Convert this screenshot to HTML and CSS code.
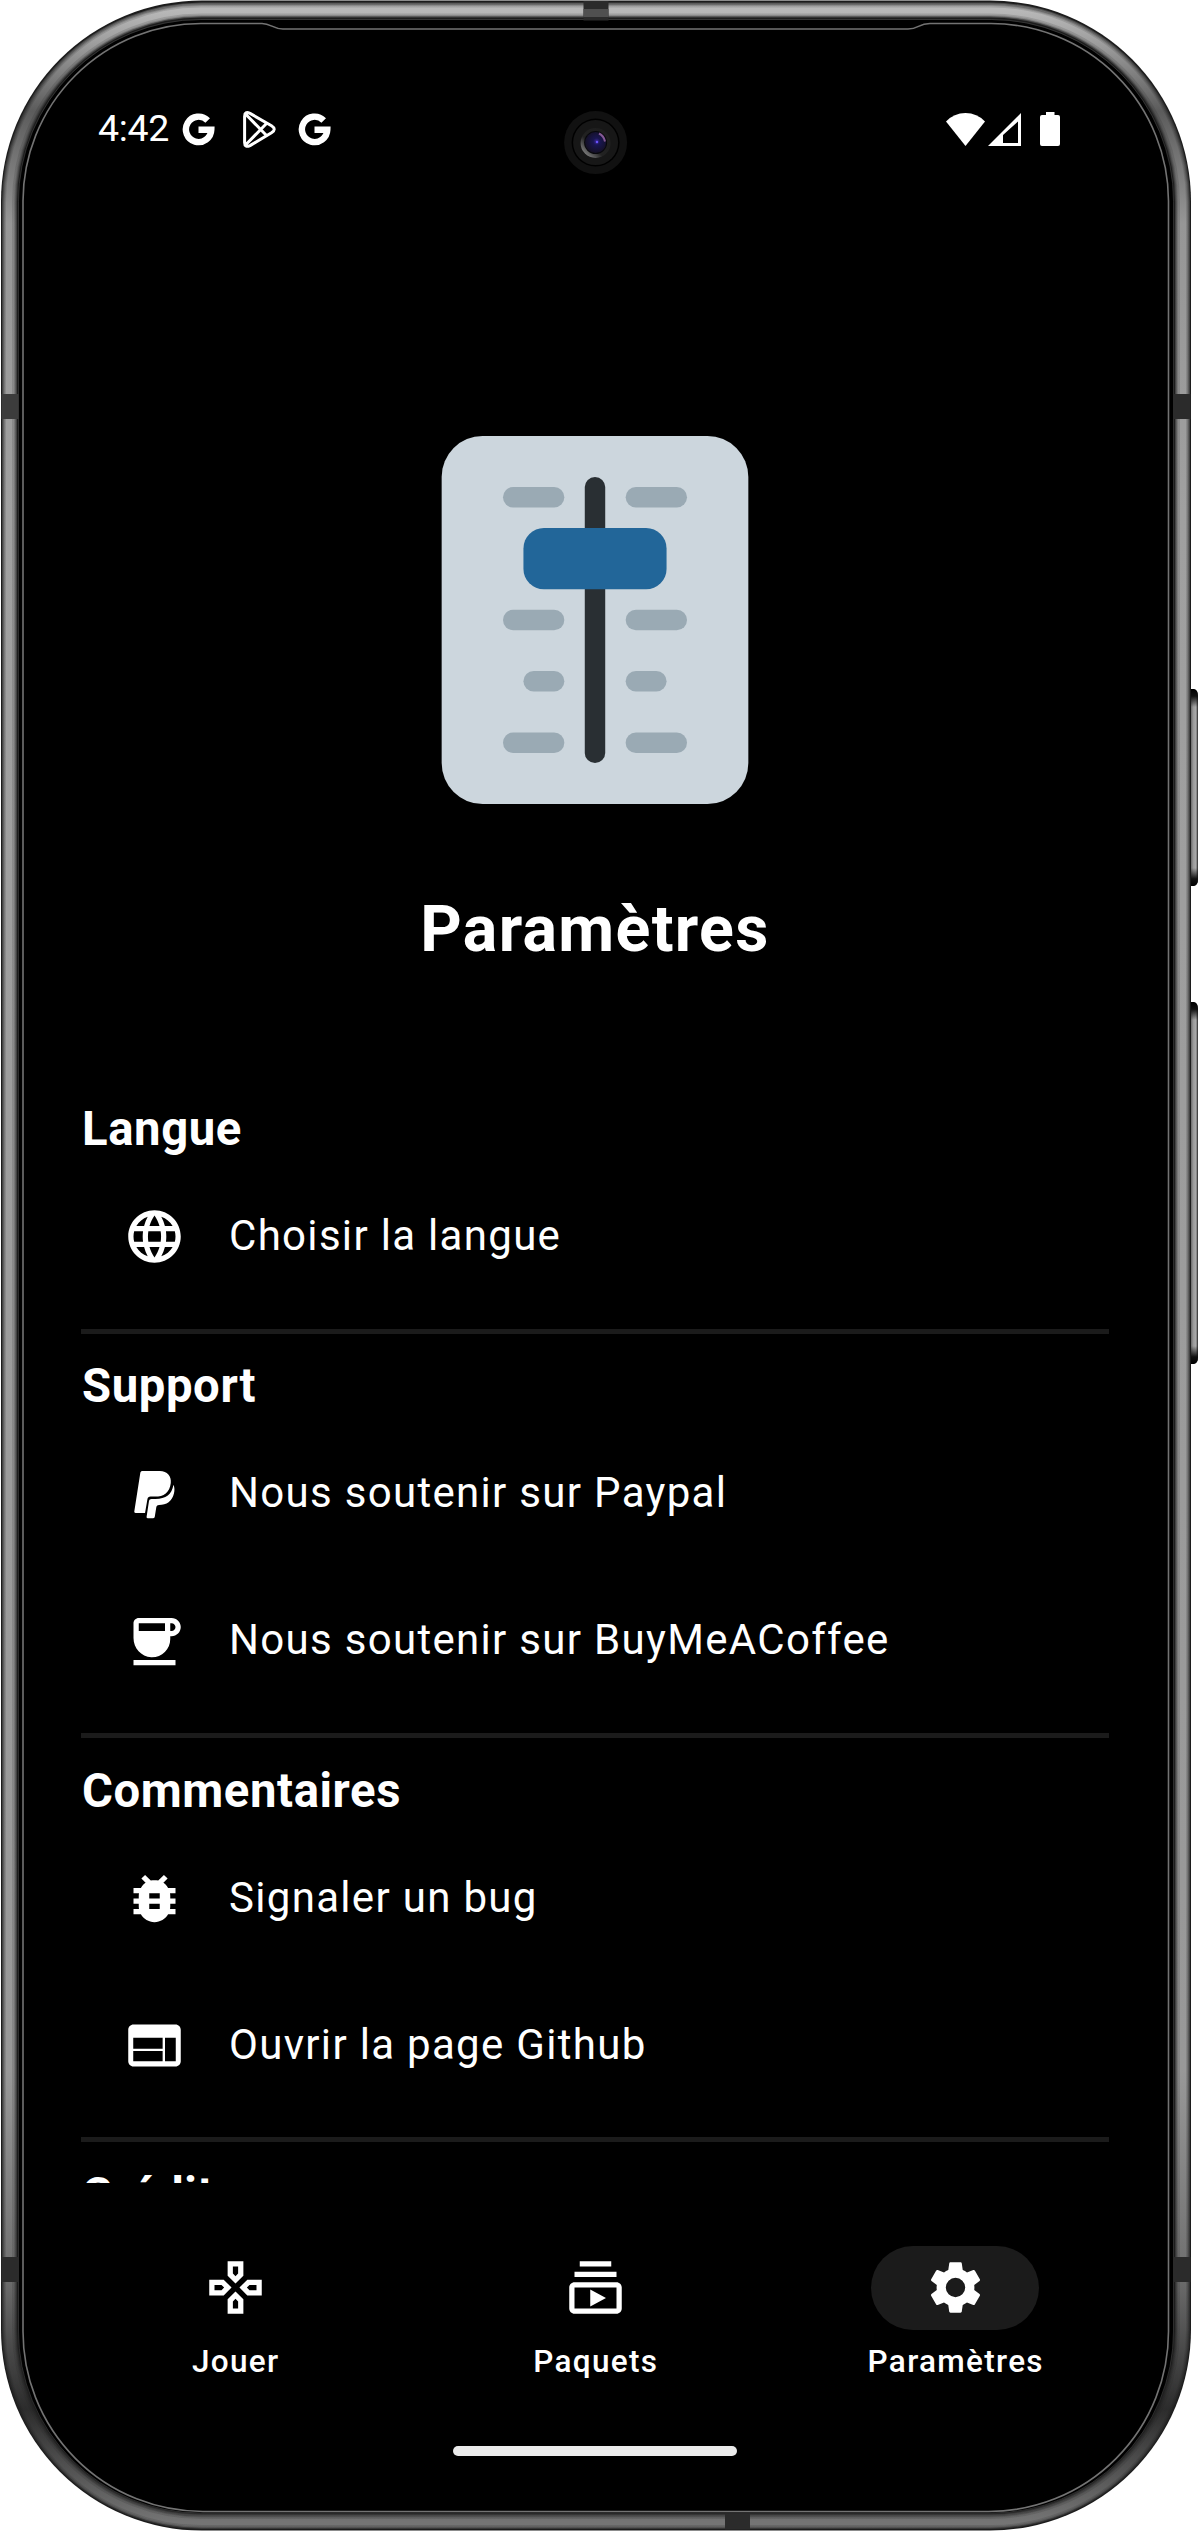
FILE: index.html
```html
<!DOCTYPE html>
<html lang="fr">
<head>
<meta charset="utf-8">
<title>Paramètres</title>
<link rel="stylesheet" href="styles.css">
</head>
<body>
<div class="device">
  <svg class="shell" viewBox="0 0 1198 2531" aria-hidden="true">
    <defs>
      <linearGradient id="metal" x1="0" y1="0" x2="0" y2="1">
        <stop offset="0" stop-color="#b8b8b8"/>
        <stop offset=".012" stop-color="#a0a0a0"/>
        <stop offset=".04" stop-color="#5c5c5c"/>
        <stop offset=".085" stop-color="#969696"/>
        <stop offset=".2" stop-color="#a0a0a0"/>
        <stop offset=".82" stop-color="#989898"/>
        <stop offset=".9" stop-color="#707070"/>
        <stop offset=".955" stop-color="#2c2c2c"/>
        <stop offset=".985" stop-color="#5c5c5c"/>
        <stop offset="1" stop-color="#747474"/>
      </linearGradient>
      <linearGradient id="button" x1="0" y1="0" x2="1" y2="0">
        <stop offset="0" stop-color="#555"/>
        <stop offset=".4" stop-color="#999"/>
        <stop offset=".75" stop-color="#aaa"/>
        <stop offset="1" stop-color="#222"/>
      </linearGradient>
      <linearGradient id="cap-top" x1="0" y1="0" x2="0" y2="1">
        <stop offset="0" stop-color="#000"/>
        <stop offset=".4" stop-color="#111"/>
        <stop offset="1" stop-color="#111" stop-opacity="0"/>
      </linearGradient>
      <linearGradient id="cap-bottom" x1="0" y1="1" x2="0" y2="0">
        <stop offset="0" stop-color="#000"/>
        <stop offset=".4" stop-color="#111"/>
        <stop offset="1" stop-color="#111" stop-opacity="0"/>
      </linearGradient>
      <linearGradient id="bezel" x1="1" y1="0" x2="0" y2="1">
        <stop offset="0" stop-color="#1c1c1c"/>
        <stop offset=".6" stop-color="#222"/>
        <stop offset="1" stop-color="#aaa"/>
      </linearGradient>
      <radialGradient id="lens" cx=".55" cy=".45" r=".55">
        <stop offset="0" stop-color="#4028a0"/>
        <stop offset=".3" stop-color="#191650"/>
        <stop offset="1" stop-color="#141024"/>
      </radialGradient>
    </defs>
    <g fill="url(#button)">
      <path d="M1190 689h4q4 1 4 7v183q0 6-4 7h-4z"/>
      <path d="M1190 1002h4q4 1 4 7v348q0 6-4 7h-4z"/>
    </g>
    <g fill="url(#cap-top)">
      <path d="M1190 689h4q4 1 4 7v11h-8z"/>
      <path d="M1190 1002h4q4 1 4 7v11h-8z"/>
    </g>
    <g fill="url(#cap-bottom)">
      <path d="M1190 886h4q4-1 4-7v-11h-8z"/>
      <path d="M1190 1364h4q4-1 4-7v-11h-8z"/>
    </g>
    <rect x="1" y="0.5" width="1190" height="2530" rx="201" fill="#1c1c1c"/>
    <g fill="none" stroke="url(#metal)">
      <rect x="9.5" y="10" width="1173" height="2511.500" rx="192" stroke-width="15" opacity=".3"/>
      <rect x="9.5" y="10" width="1173" height="2511.500" rx="192" stroke-width="13" opacity=".3"/>
      <rect x="9.5" y="10.500" width="1173" height="2511.500" rx="192" stroke-width="11" opacity=".4"/>
      <rect x="9.5" y="10.500" width="1173" height="2511.500" rx="192" stroke-width="9" opacity=".5"/>
      <rect x="9" y="10.500" width="1174" height="2511.500" rx="192" stroke-width="6"/>
    </g>
    <rect x="18.500" y="20" width="1155" height="2493" rx="182" fill="#000"/>
    <rect x="18.500" y="19.500" width="1155" height="2493.500" rx="182" fill="none" stroke="#555" stroke-width="1" opacity=".45"/>
    <g fill="#2b2b2b">
      <rect x="1.500" y="394" width="17" height="25" fill="#3c3c3c"/>
      <rect x="1173.500" y="394" width="17" height="25"/>
      <rect x="1.500" y="2257" width="17" height="25"/>
      <rect x="1173.500" y="2257" width="17" height="25"/>
      <rect x="583.500" y="1" width="25" height="19.500"/>
      <rect x="725" y="2513.500" width="25" height="16"/>
    </g>
    <rect x="583.500" y="9" width="25" height="8" fill="#505050"/>
    <path d="M23 2331V201A178 178 0 0 1 201 23.500H262C271 23.500 273 29 283 29H908C919 29 918 23.500 930 23.500H991A178 178 0 0 1 1168.500 201V2331A180 180 0 0 1 988.500 2511.500H203A180 180 0 0 1 23 2331Z" fill="none" stroke="#737373" stroke-width="1.600"/>
    <circle cx="595.600" cy="142.600" r="31.500" fill="#111"/>
    <circle cx="595.600" cy="142.600" r="24" fill="#000"/>
    <circle cx="595.600" cy="142.600" r="22.500" fill="#171717"/>
    <circle cx="595.600" cy="143" r="15" fill="url(#bezel)"/>
    <circle cx="595.600" cy="142.600" r="11.500" fill="#08080c"/>
    <circle cx="595.600" cy="142.600" r="10.500" fill="url(#lens)"/>
    <path d="M599 133.500q5 2.500 6 8" fill="none" stroke="#a06aae" stroke-width="2" opacity=".8"/>
    <circle cx="597" cy="142" r="1.200" fill="#6a55ff"/>
  </svg>

  <div class="screen">
    <header class="status">
      <span class="clock">4:42</span>
      <svg class="g-logo" viewBox="0 0 33 33"><path d="M25.700 7.500A12.700 12.700 0 1 0 29.300 16.700H16.500" fill="none" stroke="#fff" stroke-width="6.400"/></svg>
      <svg class="play-logo" viewBox="0 0 33 37"><path d="M1.600 5.400Q1.600-.2 7 2.400L28.500 14.700Q34 18.200 28.500 21.700L7 34.600Q1.600 37 1.600 31.500ZM3 3.500L23.500 24.500M3 33.500L23.500 12.500" fill="none" stroke="#fff" stroke-width="3" stroke-linejoin="round"/></svg>
      <svg class="g-logo" viewBox="0 0 33 33"><path d="M25.700 7.500A12.700 12.700 0 1 0 29.300 16.700H16.500" fill="none" stroke="#fff" stroke-width="6.400"/></svg>
      <div class="signals">
        <svg class="wifi" viewBox="0 0 39 33"><path d="M0 8.500Q8 0 19.500 0T39 8.500L19.500 33Z" fill="#fff"/></svg>
        <svg class="cell" viewBox="0 0 33 33"><path d="M33 0V33H0ZM30 8.500L15 22V30H30Z" fill="#fff" fill-rule="evenodd"/></svg>
        <svg class="battery" viewBox="0 0 20 34"><path d="M6 0h8.500v3H18q2 0 2 2v27q0 2-2 2H2q-2 0-2-2V5q0-2 2-2h4z" fill="#fff"/></svg>
      </div>
    </header>

    <main class="content">
      <svg class="hero" viewBox="0 0 36 36">
        <rect x="3" width="30" height="36" rx="4" fill="#ccd6dd"/>
        <g fill="#9aaab4">
          <rect x="9" y="5" width="6" height="2" rx="1"/><rect x="21" y="5" width="6" height="2" rx="1"/>
          <rect x="9" y="17" width="6" height="2" rx="1"/><rect x="21" y="17" width="6" height="2" rx="1"/>
          <rect x="11" y="23" width="4" height="2" rx="1"/><rect x="21" y="23" width="4" height="2" rx="1"/>
          <rect x="9" y="29" width="6" height="2" rx="1"/><rect x="21" y="29" width="6" height="2" rx="1"/>
        </g>
        <rect x="17" y="4" width="2" height="28" rx="1" fill="#292f33"/>
        <rect x="11" y="9" width="14" height="6" rx="2" fill="#226699"/>
      </svg>
      <h1 class="title">Paramètres</h1>

      <section class="group">
        <h2 class="heading">Langue</h2>
        <div class="row">
          <svg class="icon" viewBox="0 0 24 24"><path d="M11.990 2C6.470 2 2 6.480 2 12s4.470 10 9.990 10C17.520 22 22 17.520 22 12S17.520 2 11.990 2zm6.930 6h-2.950c-.32-1.250-.78-2.450-1.380-3.560 1.840.63 3.370 1.910 4.330 3.560zM12 4.040c.83 1.200 1.480 2.530 1.910 3.960h-3.820c.43-1.430 1.080-2.760 1.910-3.960zM4.260 14C4.100 13.360 4 12.690 4 12s.1-1.360.26-2h3.380c-.08.66-.14 1.320-.14 2s.06 1.340.14 2H4.260zm.82 2h2.950c.32 1.250.78 2.450 1.380 3.560-1.840-.63-3.370-1.900-4.330-3.560zm2.950-8H5.080c.96-1.660 2.490-2.930 4.330-3.560C8.810 5.550 8.350 6.750 8.030 8zM12 19.960c-.83-1.200-1.480-2.530-1.910-3.960h3.820c-.43 1.430-1.080 2.760-1.910 3.960zM14.340 14H9.660c-.09-.66-.16-1.320-.16-2s.07-1.350.16-2h4.680c.09.65.16 1.320.16 2s-.07 1.340-.16 2zm.25 5.560c.6-1.110 1.060-2.310 1.380-3.560h2.950c-.96 1.650-2.490 2.930-4.330 3.560zM16.360 14c.08-.66.14-1.320.14-2s-.06-1.340-.14-2h3.380c.16.64.26 1.310.26 2s-.1 1.360-.26 2h-3.380z"/></svg>
          <span>Choisir la langue</span>
        </div>
      </section>
      <hr class="divider">

      <section class="group">
        <h2 class="heading">Support</h2>
        <div class="row">
          <svg class="icon" viewBox="0 0 24 24"><path d="M7.500 3H14c2.900 0 4.500 1.900 4.200 4.600-.4 3.700-2.700 5.200-6 5.200h-1.700c-.7 0-1.100.4-1.200 1L8.400 19H4.800c-.4 0-.5-.2-.5-.5L6.600 3.700c.1-.5.4-.7.900-.7z"/><path d="M19.200 8.300c.5 1 .5 2.200.2 3.300-.7 2.900-2.800 4.400-5.700 4.400-.5 0-.9.300-1 .8l-.6 3.700c0 .3-.3.500-.6.500H9.400c-.3 0-.5-.2-.4-.6l.9-5.900c.1-.5.400-.8 1-.8h1.500c3.900 0 6.300-1.800 6.800-5.400z"/></svg>
          <span>Nous soutenir sur Paypal</span>
        </div>
        <div class="row">
          <svg class="icon" viewBox="0 0 24 24"><path d="M18.500 3H6C4.900 3 4 3.900 4 5v5.710c0 3.830 2.950 7.180 6.780 7.290 3.960.12 7.220-3.060 7.220-7v-1h.5c1.930 0 3.500-1.570 3.500-3.500S20.430 3 18.500 3zM16 5v3H6V5h10zm2.500 3H18V5h.5c.83 0 1.500.67 1.500 1.500S19.330 8 18.500 8zM4 19h16v2H4v-2z"/></svg>
          <span>Nous soutenir sur BuyMeACoffee</span>
        </div>
      </section>
      <hr class="divider">

      <section class="group">
        <h2 class="heading">Commentaires</h2>
        <div class="row">
          <svg class="icon" viewBox="0 0 24 24"><path d="M20 8h-2.810c-.45-.78-1.070-1.450-1.820-1.960L17 4.410 15.590 3l-2.170 2.170C12.960 5.060 12.490 5 12 5c-.49 0-.96.06-1.410.17L8.410 3 7 4.410l1.620 1.630C7.880 6.550 7.260 7.220 6.810 8H4v2h2.090c-.05.33-.09.66-.09 1v1H4v2h2v1c0 .34.04.67.09 1H4v2h2.810c1.040 1.790 2.970 3 5.190 3s4.150-1.210 5.190-3H20v-2h-2.090c.05-.33.09-.66.09-1v-1h2v-2h-2v-1c0-.34-.04-.67-.09-1H20V8zm-6 8h-4v-2h4v2zm0-4h-4v-2h4v2z"/></svg>
          <span>Signaler un bug</span>
        </div>
        <div class="row">
          <svg class="icon" viewBox="0 0 24 24"><path fill-rule="evenodd" d="M4 4h16c1.100 0 2 .9 2 2v12c0 1.100-.9 2-2 2H4c-1.100 0-2-.9-2-2V6c0-1.100.9-2 2-2zm-.1 5v4.250h11.200V9zm0 5.100v3.900h11.200v-3.900zm12.100-5.100v9h4.100V9z"/></svg>
          <span>Ouvrir la page Github</span>
        </div>
      </section>
      <hr class="divider">

      <section class="group">
        <h2 class="heading">Crédits</h2>
      </section>
    </main>

    <nav class="tabs">
      <a class="tab">
        <span class="pill"><svg class="icon" viewBox="0 0 24 24"><path d="M13 4v2.670l-1 1-1-1V4h2m7 7v2h-2.670l-1-1 1-1H20M6.670 11l1 1-1 1H4v-2h2.670M12 16.330l1 1V20h-2v-2.670l1-1M15 2H9v5.500l3 3 3-3V2zm7 7h-5.500l-3 3 3 3H22V9zM7.500 9H2v6h5.500l3-3-3-3zm4.500 4.500l-3 3V22h6v-5.500l-3-3z"/></svg></span>
        <span>Jouer</span>
      </a>
      <a class="tab">
        <span class="pill"><svg class="icon" viewBox="0 0 24 24"><path d="M4 6h16v2H4zM6 2h12v2H6zM20 10H4c-1.100 0-2 .9-2 2v8c0 1.100.9 2 2 2h16c1.100 0 2-.9 2-2v-8c0-1.100-.9-2-2-2zm0 10H4v-8h16v8zM10 12.730v6.530L16 16z"/></svg></span>
        <span>Paquets</span>
      </a>
      <a class="tab">
        <span class="pill pill-active"><svg class="icon" viewBox="0 0 24 24"><path d="M19.140,12.940c0.040-0.300,0.060-0.610,0.060-0.940c0-0.320-0.020-0.640-0.070-0.940l2.030-1.580c0.180-0.140,0.230-0.410,0.120-0.610l-1.920-3.320c-0.120-0.220-0.370-0.290-0.590-0.220l-2.390,0.960c-0.500-0.380-1.030-0.700-1.620-0.940L14.400,2.810c-0.040-0.240-0.240-0.410-0.480-0.410h-3.840c-0.240,0-0.430,0.170-0.470,0.410L9.250,5.350C8.660,5.590,8.120,5.920,7.630,6.290L5.240,5.330c-0.220-0.080-0.470,0-0.590,0.220L2.740,8.870C2.620,9.080,2.660,9.340,2.860,9.480l2.030,1.580C4.840,11.360,4.800,11.690,4.800,12s0.020,0.640,0.070,0.940l-2.030,1.580c-0.180,0.140-0.230,0.410-0.120,0.610l1.920,3.320c0.120,0.220,0.370,0.290,0.590,0.220l2.390-0.960c0.500,0.380,1.030,0.700,1.620,0.940l0.360,2.540c0.050,0.240,0.240,0.410,0.480,0.410h3.840c0.240,0,0.440-0.170,0.470-0.410l0.360-2.540c0.590-0.240,1.130-0.560,1.620-0.940l2.390,0.960c0.220,0.080,0.470,0,0.590-0.220l1.920-3.320c0.120-0.220,0.070-0.470-0.120-0.610L19.140,12.940zM12,15.700a3.700,3.700 0 1 1 0-7.400a3.700,3.700 0 0 1 0,7.400z"/></svg></span>
        <span>Paramètres</span>
      </a>
    </nav>
    <div class="home-bar"></div>
  </div>
</div>
</body>
</html>
```
FILE: styles.css
```css
* { box-sizing: border-box; }

body {
  margin: 0;
  background: #fff;
  color: #fff;
  font-family: Roboto, "Noto Sans", sans-serif;
}

.device {
  position: relative;
  width: 1198px;
  height: 2531px;
  overflow: hidden;
}

/* Phone body drawn behind the screen */
.shell {
  position: absolute;
  inset: 0;
  width: 1198px;
  height: 2531px;
}

.screen {
  position: relative;
  display: flex;
  flex-direction: column;
  width: 1080px;
  margin-left: 55px;
}

.status {
  display: flex;
  align-items: center;
  height: 52px;
  margin-top: 103px;
  padding: 0 75px 0 43px;
}

.clock {
  width: 84px;
  padding-bottom: 2px;
  font-size: 37.500px;
  line-height: 50px;
  letter-spacing: -0.300px;
}

.g-logo { width: 33px; height: 33px; }
.play-logo { width: 33px; height: 37px; margin: 0 22px 0 28px; }

.signals {
  display: flex;
  align-items: center;
  margin-left: auto;
}

.wifi { width: 39px; height: 33px; margin-right: 3.500px; }
.cell { width: 33px; height: 33px; margin-right: 19px; }
.battery { width: 20px; height: 34px; }

.content {
  display: flex;
  flex-direction: column;
  height: 2028px;
  padding: 281px 26px 0;
  overflow: hidden;
}

.content > * { flex-shrink: 0; }

.hero {
  width: 368px;
  height: 368px;
  align-self: center;
}

.title {
  margin: 83px 0 124px;
  font-size: 64.500px;
  font-weight: 700;
  line-height: 84px;
  letter-spacing: 1.300px;
  text-align: center;
}

.heading {
  height: 68.250px;
  margin: 0;
  padding-left: 1px;
  font-size: 47.250px;
  font-weight: 700;
  line-height: 68.250px;
  letter-spacing: 0.600px;
}

.row {
  display: flex;
  align-items: center;
  gap: 43px;
  height: 147px;
  padding: 0 42px;
  font-size: 42px;
  letter-spacing: 1.310px;
}

.row span { padding-bottom: 2.500px; }

.icon {
  width: 63px;
  height: 63px;
  flex: none;
  fill: #fff;
}

.divider {
  width: 100%;
  height: 5.250px;
  margin: 18.375px 0;
  border: 0;
  background: #1b1b1b;
}

.tabs {
  display: grid;
  grid-template-columns: repeat(3, 1fr);
  margin-top: 63px;
}

.tab {
  display: flex;
  flex-direction: column;
  align-items: center;
  gap: 11px;
  font-size: 31.500px;
  font-weight: 500;
  line-height: 42px;
  letter-spacing: 1.310px;
}

.tab > span:last-child { padding-left: 1.500px; }

.pill {
  display: flex;
  align-items: center;
  justify-content: center;
  width: 168px;
  height: 84px;
  padding-bottom: 1px;
  border-radius: 42px;
}

.pill-active { background: #1b1b1b; }

.home-bar {
  align-self: center;
  width: 284px;
  height: 10px;
  margin-top: 63px;
  border-radius: 5px;
  background: #ebebeb;
}
```
